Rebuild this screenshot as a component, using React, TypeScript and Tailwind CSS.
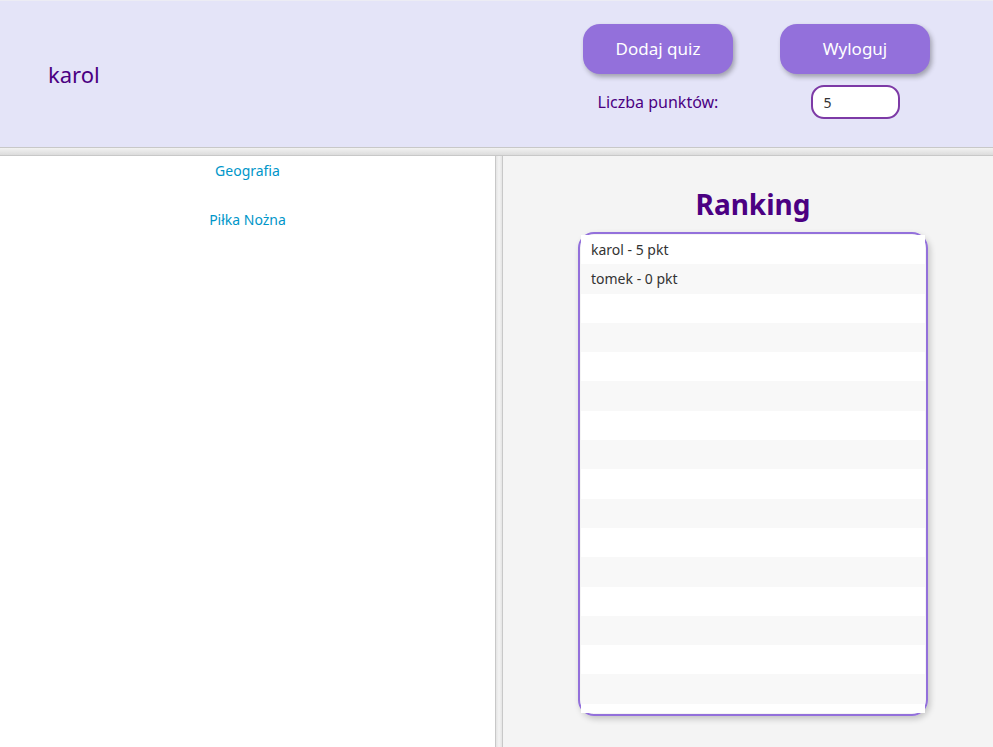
const FONT = { fontFamily: '"Noto Sans", "Open Sans", sans-serif' };

const ranking = ["karol - 5 pkt", "tomek - 0 pkt"];

function Header() {
  return (
    <header className="flex h-[148px] items-center justify-between border-t border-b border-t-[#ececf4] border-b-[#c8c8c8] bg-[#e4e4f8] pr-[63px] pl-[48px]">
      <div className="text-[22px] text-[#4b0082]">karol</div>
      <div className="grid grid-cols-[150px_150px] gap-x-[47px] gap-y-[11px] pb-[5px]">
        <button className="h-[50px] rounded-[17px] bg-[#9370db] text-[17px] text-white shadow-[2px_3px_5px_rgba(0,0,0,0.3)]">
          Dodaj quiz
        </button>
        <button className="h-[50px] rounded-[17px] bg-[#9370db] text-[17px] text-white shadow-[2px_3px_5px_rgba(0,0,0,0.3)]">
          Wyloguj
        </button>
        <div className="flex items-center justify-center text-[16px] text-[#4b0082]">Liczba punktów:</div>
        <div className="flex justify-center">
          <div className="flex h-[34px] w-[89px] items-center rounded-[13px] border-2 border-[#7d3aa6] bg-white pl-[11px] text-[14px] text-[#333]">
            5
          </div>
        </div>
      </div>
    </header>
  );
}

export default function App() {
  return (
    <div className="flex h-[747px] w-[993px] flex-col overflow-hidden bg-white" style={FONT}>
      <Header />
      <div className="h-[8px] border-b border-[#c8c8c8] bg-gradient-to-b from-[#f2f2f2] to-[#dcdcdc]" />
      <div className="flex min-h-0 flex-1">
        <div className="flex w-[495px] flex-col items-center gap-[28px] bg-white pt-[4px] text-[14px] text-[#0096c9]">
          <span>Geografia</span>
          <span>Piłka Nożna</span>
        </div>
        <div className="w-[8px] border-x border-[#c8c8c8] bg-gradient-to-r from-[#e4e4e4] via-[#f4f4f4] to-[#e4e4e4]" />
        <div className="flex-1 bg-[#f4f4f4] pt-[28px] pl-[75px]">
          <h2 className="w-[350px] text-center text-[28px] leading-[40px] font-bold text-[#4b0082]">Ranking</h2>
          <div className="mt-[8px] h-[484px] w-[350px] rounded-[16px] border-2 border-[#9370db] px-[1px] pt-[1px] pb-[1px] shadow-[2px_3px_6px_rgba(0,0,0,0.2)]">
            <div className="h-full overflow-hidden">
              {Array.from({ length: 17 }).map((_, i) => (
                <div
                  key={i}
                  className={`flex h-[29.3px] items-center pl-[10px] text-[14px] text-[#333] ${i % 2 === 0 ? "bg-white" : "bg-[#f8f8f8]"}`}
                >
                  {ranking[i] ?? ""}
                </div>
              ))}
            </div>
          </div>
        </div>
      </div>
    </div>
  );
}
